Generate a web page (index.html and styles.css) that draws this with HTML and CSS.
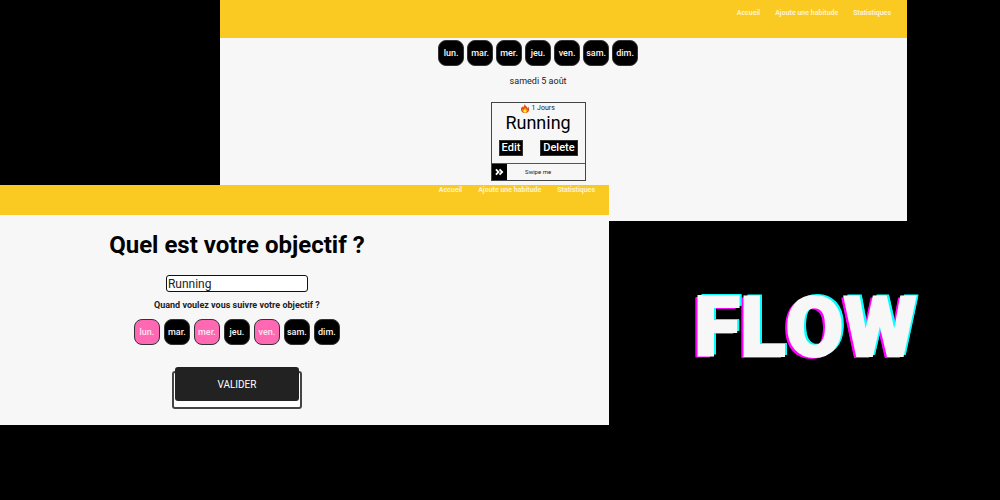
FILE: index.html
```html
<!DOCTYPE html>
<html lang="fr">
<head>
<meta charset="utf-8">
<title>Flow</title>
<link rel="stylesheet" href="styles.css">
</head>
<body>
<main class="stage">
  <section class="window home">
    <header class="bar">
      <nav class="nav"><a href="#">Accueil</a><a href="#">Ajoute une habitude</a><a href="#">Statistiques</a></nav>
    </header>
    <div class="content">
      <div class="days">
        <button class="day">lun.</button><button class="day">mar.</button><button class="day">mer.</button><button class="day">jeu.</button><button class="day">ven.</button><button class="day">sam.</button><button class="day">dim.</button>
      </div>
      <p class="date">samedi 5 août</p>
      <article class="card">
        <p class="streak"><svg class="flame" viewBox="0 0 16 18" aria-hidden="true"><path fill="#d84315" d="M7 0c1 4 6 5 6 9 1-1 1-2 1-4 2 3 2 5 2 7 0 4-4 6-8 6s-8-2-8-7c0-3 2-5 3-7 0 2 0 3 1 3 2-2 3-4 3-7z"/><path fill="#ff9800" d="M7 4c1 4 4 4 4 7 1 0 1-1 1-2 3 4 0 8-4 8s-7-4-5-8c0 1 1 2 2 2 2-1 3-4 2-7z"/><path fill="#ffeb3b" d="M8 10c0 2 3 2 3 5 0 1-1 2-3 2s-3-1-3-3 2-2 3-4z"/></svg>1 Jours</p>
        <h2 class="habit">Running</h2>
        <div class="actions"><button class="action">Edit</button><button class="action">Delete</button></div>
        <div class="swipe">
          <button class="handle" aria-label="Glisser"><svg class="chevrons" viewBox="0 0 10 8" aria-hidden="true"><path d="M1 1l3 3-3 3M5 1l3 3-3 3"/></svg></button>
          <span class="swipe-text">Swipe me</span>
        </div>
      </article>
    </div>
  </section>

  <section class="window goal">
    <header class="bar">
      <nav class="nav"><a href="#">Accueil</a><a href="#">Ajoute une habitude</a><a href="#">Statistiques</a></nav>
    </header>
    <form class="content">
      <h1 class="title"><label for="goal">Quel est votre objectif ?</label></h1>
      <input class="field" id="goal" type="text" value="Running">
      <p class="question">Quand voulez vous suivre votre objectif ?</p>
      <div class="days">
        <button type="button" class="day on">lun.</button><button type="button" class="day">mar.</button><button type="button" class="day on">mer.</button><button type="button" class="day">jeu.</button><button type="button" class="day on">ven.</button><button type="button" class="day">sam.</button><button type="button" class="day">dim.</button>
      </div>
      <button type="button" class="submit">VALIDER</button>
    </form>
  </section>

  <div class="logo">FLOW</div>
</main>
</body>
</html>
```
FILE: styles.css
```css
* { box-sizing: border-box; }
body {
  margin: 0;
  background: #000;
  color: #222;
  font-family: Roboto, sans-serif;
}
h1, h2, p { margin: 0; font-weight: 400; }
button, input { font-family: inherit; margin: 0; }

/* Free canvas holding two overlapping windows and the logo */
.stage { position: relative; min-height: 100vh; overflow: hidden; }
.window { position: absolute; background: #f7f7f7; }
.home { left: 22%; top: 0; width: 68.7%; }
.goal { left: 0; top: 185px; width: 60.9%; }

.bar {
  display: flex;
  justify-content: flex-end;
  background: #fbca22;
}
.home .bar { padding: 9px 16px 21px; }
.goal .bar { padding: 1px 14px 21px; }
.nav { display: flex; gap: 15px; }
.goal .nav { gap: 16px; }
.nav a {
  color: #fff3cb;
  font-size: 7px;
  line-height: 8px;
  font-weight: 700;
  text-decoration: none;
}

.content { display: flex; flex-direction: column; align-items: center; }
.home .content { padding: 2px 7.4% 40px 0; }
.goal .content { padding: 15px 22.2% 24px 0; }

.days { display: flex; gap: 3px; }
.goal .days { gap: 4px; margin-top: 8px; }
.day {
  width: 26px;
  height: 26px;
  padding: 0;
  border: 1px solid #333;
  border-radius: 8px;
  background: #000;
  color: #f7f7f7;
  font-size: 9px;
  font-weight: 500;
}
.day.on { background: #ff69b4; color: #ffe3f1; }

.date { margin-top: 9px; font-size: 9px; line-height: 12px; }

.card {
  width: 95px;
  margin-top: 15px;
  border: 1px solid #444;
  text-align: center;
}
.streak {
  display: flex;
  justify-content: center;
  align-items: center;
  gap: 2px;
  font-size: 7px;
  line-height: 10px;
}
.flame { width: 8px; height: 9px; }
.habit { font-size: 18px; line-height: 20px; color: #000; }
.actions { display: flex; justify-content: space-between; padding: 7px; }
.action {
  height: 16px;
  padding: 0 2px;
  border: 1px solid #333;
  background: #000;
  color: #fff;
  font-size: 11px;
  font-weight: 500;
  line-height: 14px;
}
.swipe { display: flex; align-items: center; border-top: 1px solid #555; }
.handle {
  display: flex;
  align-items: center;
  justify-content: center;
  width: 15px;
  height: 16px;
  padding: 0;
  border: 0;
  background: #000;
}
.chevrons { width: 9px; height: 8px; fill: none; stroke: #fff; stroke-width: 2; }
.swipe-text { flex: 1; padding-right: 15px; font-size: 6px; line-height: 8px; }

.title { font-size: 24px; line-height: 30px; font-weight: 700; color: #000; }
.field {
  width: 142px;
  height: 17px;
  margin-top: 15px;
  padding: 0 1px;
  border: 1px solid #111;
  border-radius: 3px;
  background: #fff;
  color: #222;
  font-size: 12px;
}
.question { margin-top: 7px; font-size: 9px; line-height: 12px; font-weight: 700; }

.submit {
  position: relative;
  z-index: 0;
  width: 124px;
  height: 34px;
  margin-top: 22px;
  padding: 0;
  border: 0;
  background: none;
  color: #fff;
  font-size: 10px;
}
.submit::before,
.submit::after { content: ""; position: absolute; border-radius: 3px; }
.submit::before {
  z-index: -2;
  inset: 4px -3px -8px;
  border: 2px solid #444;
  background: #fff;
}
.submit::after { z-index: -1; inset: 0; background: #222; }

.logo {
  position: absolute;
  left: 69.4%;
  top: 279px;
  color: #f7f7f7;
  font-size: 84px;
  line-height: 98px;
  font-weight: 900;
  font-kerning: none;
  -webkit-text-stroke: 2px #f7f7f7;
  text-shadow: 3px -1px 0 #0ff, 3px -2px 0 #0ff, -3px 1px 0 #f0f, -3px 2px 0 #f0f;
}
```
